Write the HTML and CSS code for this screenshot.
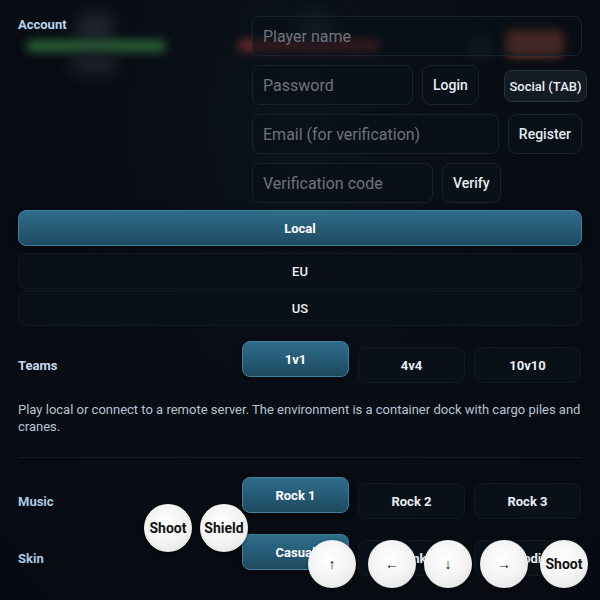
FILE: index.html
```html
<!DOCTYPE html>
<html lang="en">
<head>
    <meta charset="UTF-8">
    <meta name="viewport" content="width=device-width, initial-scale=1.0">
    <title>Lobby</title>
    <link rel="stylesheet" href="styles.css">
</head>
<body>
    <!-- blurred game scene behind the menu -->
    <div class="scene">
        <div class="blob grey" style="left:78px;top:14px;width:34px;height:26px"></div>
        <div class="blob green" style="left:26px;top:40px;width:140px;height:12px"></div>
        <div class="blob grey" style="left:72px;top:56px;width:44px;height:16px"></div>
        <div class="blob red" style="left:238px;top:40px;width:142px;height:11px"></div>
        <div class="blob grey" style="left:298px;top:18px;width:34px;height:22px"></div>
        <div class="blob dark" style="left:470px;top:36px;width:20px;height:20px"></div>
        <div class="blob orange" style="left:506px;top:30px;width:58px;height:26px"></div>
    </div>

    <main class="panel">
        <section class="account">
            <div class="label">Account</div>
            <div class="auth">
                <input type="text" class="field" placeholder="Player name">
                <div class="line">
                    <input type="password" class="field w-pw" placeholder="Password">
                    <button class="btn">Login</button>
                </div>
                <div class="line">
                    <input type="email" class="field w-email" placeholder="Email (for verification)">
                    <button class="btn">Register</button>
                </div>
                <div class="line">
                    <input type="text" class="field w-code" placeholder="Verification code">
                    <button class="btn">Verify</button>
                </div>
            </div>
        </section>

        <div class="servers">
            <button class="opt active">Local</button>
            <button class="opt">EU</button>
            <button class="opt">US</button>
        </div>

        <div class="row first">
            <div class="label">Teams</div>
            <button class="opt active">1v1</button>
            <button class="opt">4v4</button>
            <button class="opt">10v10</button>
        </div>

        <p class="desc">Play local or connect to a remote server. The environment is a container dock with cargo piles and cranes.</p>

        <hr class="sep">

        <div class="row music">
            <div class="label blue">Music</div>
            <button class="opt active">Rock 1</button>
            <button class="opt">Rock 2</button>
            <button class="opt">Rock 3</button>
        </div>

        <div class="row">
            <div class="label blue">Skin</div>
            <button class="opt active">Casual</button>
            <button class="opt">Punk</button>
            <button class="opt">Hoodie</button>
        </div>
    </main>

    <button class="social">Social (TAB)</button>

    <!-- touch controls -->
    <button class="touch" style="left:144px;top:504px">Shoot</button>
    <button class="touch" style="left:200px;top:504px">Shield</button>
    <button class="touch arrow" style="left:308px;top:540px">&uarr;</button>
    <button class="touch arrow" style="left:368px;top:540px">&larr;</button>
    <button class="touch arrow" style="left:424px;top:540px">&darr;</button>
    <button class="touch arrow" style="left:480px;top:540px">&rarr;</button>
    <button class="touch" style="left:540px;top:540px">Shoot</button>
</body>
</html>
```

FILE: styles.css
```css
* {
    box-sizing: border-box;
}
html, body {
    margin: 0;
    height: 100%;
}
body {
    font-family: Roboto, "Liberation Sans", sans-serif;
    background: radial-gradient(ellipse at 50% 20%, #0c121b 0%, #080c13 60%, #070a10 100%);
    color: #e4ecf3;
    overflow: hidden;
    position: relative;
}
.scene {
    position: absolute;
    inset: 0;
    pointer-events: none;
}
.blob {
    position: absolute;
    border-radius: 6px;
    filter: blur(5px);
}
.blob.green { background: #2a5f37; }
.blob.red { background: #6e2a2a; }
.blob.orange { background: #8c4433; filter: blur(5px); }
.blob.grey { background: #22272f; filter: blur(8px); }
.blob.dark { background: #1a2229; filter: blur(6px); }

.panel {
    position: relative;
    padding: 16px 18px 0;
}
.label {
    font-size: 13px;
    font-weight: 700;
    color: #c7dcec;
}
.label.blue {
    color: #a9cbe4;
}

.account {
    display: flex;
    justify-content: space-between;
}
.account .label {
    padding-top: 1px;
    color: #b9d6ee;
}
.auth {
    width: 330px;
    display: flex;
    flex-direction: column;
    gap: 9px;
}
.line {
    display: flex;
    gap: 9px;
}
.field {
    height: 40px;
    width: 100%;
    padding: 0 10px;
    font-family: inherit;
    font-size: 16px;
    color: #e4ecf3;
    background: rgba(10, 16, 23, 0.55);
    border: 1px solid #19222c;
    border-radius: 8px;
    outline: none;
}
.field::placeholder {
    color: #6d747c;
}
.w-pw { width: 161px; }
.w-email { width: 247px; }
.w-code { width: 181px; }

.btn {
    height: 40px;
    padding: 0 10px;
    font-family: inherit;
    font-size: 14px;
    font-weight: 500;
    color: #e4ecf3;
    background: rgba(10, 17, 24, 0.7);
    border: 1px solid #1a232d;
    border-radius: 9px;
}

.opt {
    height: 36px;
    font-family: inherit;
    font-size: 13px;
    font-weight: 700;
    color: #e8eff5;
    background: #0a1017;
    border: 1px solid #111922;
    border-radius: 8px;
}
.opt.active {
    transform: translateY(-6px);
    background: linear-gradient(#2f6d8a, #1e4a61);
    border-color: #3d7f9d;
    color: #fff;
    box-shadow: 0 2px 6px rgba(0, 0, 0, 0.5);
}

.servers {
    margin-top: 13px;
    display: flex;
    flex-direction: column;
    gap: 1px;
}
.servers .opt {
    width: 100%;
    font-weight: 500;
}
.servers .opt.active {
    font-weight: 700;
}

.row {
    display: grid;
    grid-template-columns: 215px 107px 107px 107px;
    column-gap: 9px;
    align-items: center;
    margin-top: 21px;
}

.desc {
    margin: 18px 0 0;
    font-size: 13px;
    line-height: 17px;
    color: #b6c5d3;
}

.sep {
    margin: 22px 0 0;
    border: none;
    border-top: 1px solid #141c26;
}
.row.music {
    margin-top: 25px;
}

.social {
    position: absolute;
    left: 504px;
    top: 70px;
    width: 83px;
    height: 32px;
    padding: 0;
    font-family: Roboto, "Liberation Sans", sans-serif;
    font-size: 13px;
    font-weight: 500;
    color: #e8eff5;
    background: #131b23;
    border: 1px solid #27323d;
    border-radius: 8px;
}

.touch {
    position: absolute;
    width: 48px;
    height: 48px;
    padding: 0;
    border: none;
    border-radius: 50%;
    background: radial-gradient(circle at 45% 40%, #ffffff 0%, #f2f2f2 55%, #d9d9d9 100%);
    box-shadow: 0 1px 3px rgba(0, 0, 0, 0.5);
    font-family: Roboto, "Liberation Sans", sans-serif;
    font-size: 14px;
    font-weight: 700;
    color: #111;
}
.touch.arrow {
    font-size: 14px;
    font-weight: 500;
}
```
